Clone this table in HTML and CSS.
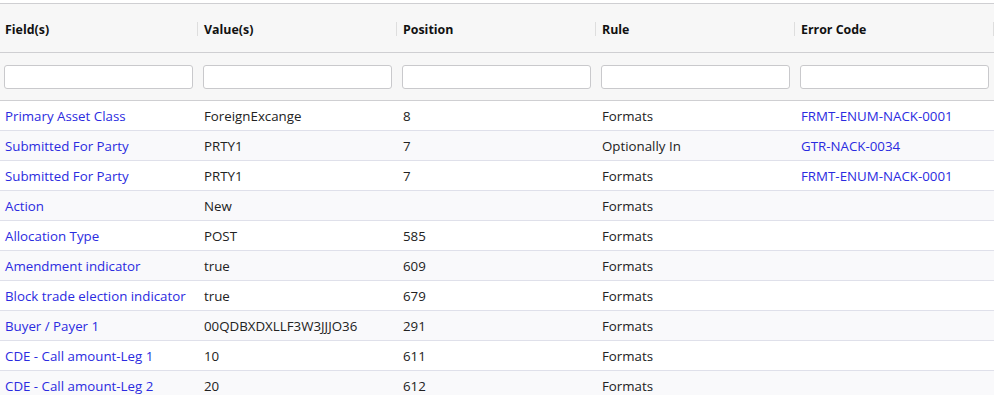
FILE: index.html
```html
<!DOCTYPE html>
<html>
<head>
<meta charset="utf-8">
<link rel="stylesheet" href="styles.css">
</head>
<body>
<div class="wrap">
<table class="grid">
  <colgroup><col><col><col><col><col></colgroup>
  <thead>
    <tr class="head">
      <th><div class="hcell"><span>Field(s)</span><i class="sep"></i></div></th>
      <th><div class="hcell"><span>Value(s)</span><i class="sep"></i></div></th>
      <th><div class="hcell"><span>Position</span><i class="sep"></i></div></th>
      <th><div class="hcell"><span>Rule</span><i class="sep"></i></div></th>
      <th><div class="hcell"><span>Error Code</span><i class="sep"></i></div></th>
    </tr>
    <tr class="filters">
      <th><input class="filter" type="text"></th>
      <th><input class="filter" type="text"></th>
      <th><input class="filter" type="text"></th>
      <th><input class="filter" type="text"></th>
      <th><input class="filter" type="text"></th>
    </tr>
  </thead>
  <tbody>
    <tr><td><a class="lnk">Primary Asset Class</a></td><td>ForeignExcange</td><td>8</td><td>Formats</td><td><a class="lnk">FRMT-ENUM-NACK-0001</a></td></tr>
    <tr><td><a class="lnk">Submitted For Party</a></td><td>PRTY1</td><td>7</td><td>Optionally In</td><td><a class="lnk">GTR-NACK-0034</a></td></tr>
    <tr><td><a class="lnk">Submitted For Party</a></td><td>PRTY1</td><td>7</td><td>Formats</td><td><a class="lnk">FRMT-ENUM-NACK-0001</a></td></tr>
    <tr><td><a class="lnk">Action</a></td><td>New</td><td></td><td>Formats</td><td></td></tr>
    <tr><td><a class="lnk">Allocation Type</a></td><td>POST</td><td>585</td><td>Formats</td><td></td></tr>
    <tr><td><a class="lnk">Amendment indicator</a></td><td>true</td><td>609</td><td>Formats</td><td></td></tr>
    <tr><td><a class="lnk">Block trade election indicator</a></td><td>true</td><td>679</td><td>Formats</td><td></td></tr>
    <tr><td><a class="lnk">Buyer / Payer 1</a></td><td>00QDBXDXLLF3W3JJJO36</td><td>291</td><td>Formats</td><td></td></tr>
    <tr><td><a class="lnk">CDE - Call amount-Leg 1</a></td><td>10</td><td>611</td><td>Formats</td><td></td></tr>
    <tr><td><a class="lnk">CDE - Call amount-Leg 2</a></td><td>20</td><td>612</td><td>Formats</td><td></td></tr>
  </tbody>
</table>
</div>
</body>
</html>
```

FILE: styles.css
```css
html, body {
  margin: 0;
  padding: 0;
  background: #ffffff;
  overflow: hidden;
}
body {
  font-family: "Open Sans", "Noto Sans", "Liberation Sans", sans-serif;
  font-size: 13.3px;
  color: #222222;
}
.wrap {
  padding-top: 3px;
  width: 995px;
}
.grid {
  border-collapse: collapse;
  table-layout: fixed;
  width: 995px;
  border-top: 1px solid #cfcfd2;
}
.grid col {
  width: 199px;
}
.head th {
  background: #f7f7f7;
  height: 48px;
  padding: 0;
  text-align: left;
  font-weight: 700;
  font-size: 12.4px;
  color: #111111;
  border-bottom: 1px solid #cfcfd2;
}
.hcell {
  display: flex;
  align-items: center;
  justify-content: space-between;
  padding: 2px 1px 0 5px;
}
.sep {
  display: block;
  width: 1px;
  height: 14px;
  background: #dedede;
}
.filters th {
  background: #f7f7f7;
  height: 47px;
  padding: 0 0 0 4px;
  text-align: left;
  border-bottom: 1px solid #cfcfd2;
}
.filter {
  display: block;
  box-sizing: border-box;
  width: 189px;
  height: 24px;
  margin: 0;
  border: 1px solid #c9c9cc;
  border-radius: 3px;
  background: #ffffff;
}
tbody td {
  height: 28px;
  padding: 1px 0 0 5px;
  border-bottom: 1px solid #dfe0ea;
  white-space: nowrap;
  overflow: hidden;
}
tbody tr:nth-child(even) td {
  background: #f9f9fb;
}
tbody tr:nth-child(odd) td {
  background: #ffffff;
}
.lnk {
  color: #2b2be0;
  text-decoration: none;
}
```
